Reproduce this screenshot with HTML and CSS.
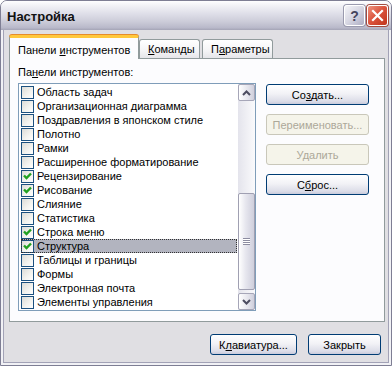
FILE: index.html
```html
<!DOCTYPE html>
<html lang="ru">
<head>
    <meta charset="UTF-8">
    <title>Настройка</title>
    <link rel="stylesheet" href="styles.css">
</head>
<body>
    <div class="window">
        <div class="titlebar">
            <span class="title">Настройка</span>
            <div class="caption-buttons">
                <div class="cap-btn help">?</div>
                <div class="cap-btn close">
                    <svg width="13" height="13" viewBox="0 0 13 13">
                        <path d="M2 2 L11 11 M11 2 L2 11" stroke="#fff" stroke-width="2.2" stroke-linecap="square"/>
                    </svg>
                </div>
            </div>
        </div>

        <div class="frame">
            <div class="client">
                <div class="tabs">
                    <div class="tab active">Панели <u>и</u>нструментов</div>
                    <div class="tab tab-commands"><u>К</u>оманды</div>
                    <div class="tab tab-options">П<u>а</u>раметры</div>
                </div>

                <div class="panel">
                    <div class="list-col">
                        <div class="list-label">Па<u>н</u>ели инструментов:</div>
                        <div class="listbox">
                            <ul class="items">
                                <li><span class="check"></span>Область задач</li>
                                <li><span class="check"></span>Организационная диаграмма</li>
                                <li><span class="check"></span>Поздравления в японском стиле</li>
                                <li><span class="check"></span>Полотно</li>
                                <li><span class="check"></span>Рамки</li>
                                <li><span class="check"></span>Расширенное форматирование</li>
                                <li><span class="check on"></span>Рецензирование</li>
                                <li><span class="check on"></span>Рисование</li>
                                <li><span class="check"></span>Слияние</li>
                                <li><span class="check"></span>Статистика</li>
                                <li><span class="check on"></span>Строка меню</li>
                                <li class="selected"><span class="check on"></span>Структура</li>
                                <li><span class="check"></span>Таблицы и границы</li>
                                <li><span class="check"></span>Формы</li>
                                <li><span class="check"></span>Электронная почта</li>
                                <li><span class="check"></span>Элементы управления</li>
                            </ul>
                            <div class="scrollbar">
                                <div class="sb-btn">
                                    <svg width="9" height="6" viewBox="0 0 9 6"><path d="M1 5 L4.5 1.5 L8 5" fill="none" stroke="#4d4d60" stroke-width="2"/></svg>
                                </div>
                                <div class="sb-track">
                                    <div class="sb-space"></div>
                                    <div class="sb-thumb"><span class="grip"></span></div>
                                </div>
                                <div class="sb-btn">
                                    <svg width="9" height="6" viewBox="0 0 9 6"><path d="M1 1 L4.5 4.5 L8 1" fill="none" stroke="#4d4d60" stroke-width="2"/></svg>
                                </div>
                            </div>
                        </div>
                    </div>

                    <div class="side-buttons">
                        <div class="btn">Со<u>з</u>дать...</div>
                        <div class="btn disabled">Переименовать...</div>
                        <div class="btn disabled">Удалить</div>
                        <div class="btn">С<u>б</u>рос...</div>
                    </div>
                </div>

                <div class="footer">
                    <div class="btn keyboard">К<u>л</u>авиатура...</div>
                    <div class="btn closebtn">Закрыть</div>
                </div>
            </div>
        </div>
    </div>
</body>
</html>
```

FILE: styles.css
```css
* {
    box-sizing: border-box;
}

body {
    margin: 0;
    font-family: "Liberation Sans", Arial, sans-serif;
    font-size: 11px;
    color: #000;
    background: #fff;
}

u {
    text-decoration: underline;
    text-underline-offset: 1px;
}

.window {
    width: 392px;
    height: 366px;
    border: 1px solid #7e7e94;
    border-radius: 7px 7px 0 0;
    display: flex;
    flex-direction: column;
    background: #f1f1f5;
    overflow: hidden;
}

/* title bar */
.titlebar {
    height: 29px;
    flex: none;
    display: flex;
    align-items: center;
    padding: 0 3px 0 6px;
    background: linear-gradient(#fefeff 0%, #f0f0f5 18%, #dedee8 45%, #cbcbd8 72%, #b9b9ca 92%, #a4a4b6 100%);
}

.title {
    flex: 1;
    font-weight: bold;
    font-size: 13px;
    padding-top: 1px;
    color: #111;
}

.caption-buttons {
    display: flex;
    gap: 2px;
}

.cap-btn {
    width: 21px;
    height: 21px;
    border: 1px solid #fff;
    border-radius: 3px;
    display: flex;
    align-items: center;
    justify-content: center;
}

.help {
    background: linear-gradient(135deg, #f4f4f8 0%, #d6d6e2 50%, #aeaec4 100%);
    color: #45455c;
    font-weight: bold;
    font-size: 14px;
    box-shadow: 0 0 0 1px #9a9aae;
}

.close {
    background: linear-gradient(135deg, #ee9480 0%, #dc5640 45%, #c0341c 100%);
    box-shadow: 0 0 0 1px #a24c40;
}

/* window frame */
.frame {
    flex: 1;
    display: flex;
    padding: 0 2px 2px;
}

.client {
    flex: 1;
    display: flex;
    flex-direction: column;
    border: 1px solid #a2a2b6;
    border-top: none;
    background: #e0dfe3;
    padding: 5px 3px 0 5px;
}

/* tabs */
.tabs {
    height: 23px;
    display: flex;
    align-items: flex-end;
    flex: none;
}

.tab {
    height: 19px;
    padding: 3px 0 0 8px;
    border: 1px solid #919b9c;
    border-bottom: none;
    border-radius: 3px 3px 0 0;
    background: linear-gradient(#ffffff, #f4f4f6 60%, #e6e6ea);
    white-space: nowrap;
}

.tab-commands {
    width: 61px;
    margin-right: 2px;
}

.tab-options {
    width: 71px;
}

.tab.active {
    width: 130px;
    height: 24px;
    margin-bottom: -1px;
    padding: 6px 0 0 8px;
    background: #fcfcfe;
    border-top: 3px solid #ffc83c;
    box-shadow: 0 -1px 0 #e68b2c;
    position: relative;
    z-index: 1;
}

/* tab page */
.panel {
    height: 264px;
    flex: none;
    display: flex;
    gap: 10px;
    border: 1px solid #919b9c;
    background: #fcfcfe;
    padding: 0 14px 0 8px;
}

.list-col {
    width: 238px;
}

.list-label {
    margin-top: 7px;
    line-height: 13px;
}

.listbox {
    margin-top: 4px;
    height: 228px;
    border: 1px solid #7f9db9;
    background: #fff;
    display: flex;
}

.items {
    list-style: none;
    margin: 0;
    padding: 1px 0 0;
    flex: 1;
}

.items li {
    height: 14px;
    display: flex;
    align-items: center;
    margin: 0 1px 0 2px;
    white-space: nowrap;
}

.items li.selected {
    background: #b2b4bf;
    outline: 1px dotted #333;
    outline-offset: -1px;
}

.check {
    width: 13px;
    height: 13px;
    flex: none;
    margin-right: 3px;
    border: 1px solid #1c5180;
    background: linear-gradient(135deg, #dcdcd7 0%, #f4f4f0 60%, #ffffff 100%);
}

.check.on {
    background-image:
        url("data:image/svg+xml,%3Csvg xmlns='http://www.w3.org/2000/svg' width='11' height='11'%3E%3Cpath d='M2 4.5 L4.5 7 L9 2.5' fill='none' stroke='%2321a121' stroke-width='2.4'/%3E%3C/svg%3E"),
        linear-gradient(135deg, #dcdcd7 0%, #f4f4f0 60%, #ffffff 100%);
}

/* scrollbar */
.scrollbar {
    width: 17px;
    flex: none;
    display: flex;
    flex-direction: column;
    background: linear-gradient(to right, #e4e4ec, #fafafc);
}

.sb-btn {
    height: 17px;
    flex: none;
    border: 1px solid #a6a6b8;
    border-radius: 2px;
    background: linear-gradient(to right, #ffffff, #e4e4ec 60%, #cfcfdc);
    display: flex;
    align-items: center;
    justify-content: center;
}

.sb-track {
    flex: 1;
    display: flex;
    flex-direction: column;
}

.sb-space {
    height: 92px;
}

.sb-thumb {
    height: 97px;
    border: 1px solid #a0a0b2;
    border-radius: 2px;
    background: linear-gradient(to right, #ffffff, #e6e6ee 45%, #cfcfdc);
    display: flex;
    align-items: center;
    justify-content: center;
}

.grip {
    width: 7px;
    height: 7px;
    background: repeating-linear-gradient(#8c8ca0 0 1px, #ffffff 1px 2px);
}

/* buttons */
.side-buttons {
    width: 103px;
    padding-top: 25px;
    display: flex;
    flex-direction: column;
    gap: 9px;
}

.btn {
    height: 21px;
    border: 1px solid #003c74;
    border-radius: 3px;
    background: linear-gradient(#ffffff, #f2f2f6 45%, #dcdde8 85%, #c9cbdc);
    display: flex;
    align-items: center;
    justify-content: center;
}

.btn.disabled {
    border-color: #c9c7ba;
    background: #f5f4ea;
    color: #aca899;
}

.footer {
    display: flex;
    justify-content: flex-end;
    gap: 11px;
    margin-top: 12px;
    padding-right: 4px;
}

.keyboard {
    width: 87px;
}

.closebtn {
    width: 73px;
}
```
